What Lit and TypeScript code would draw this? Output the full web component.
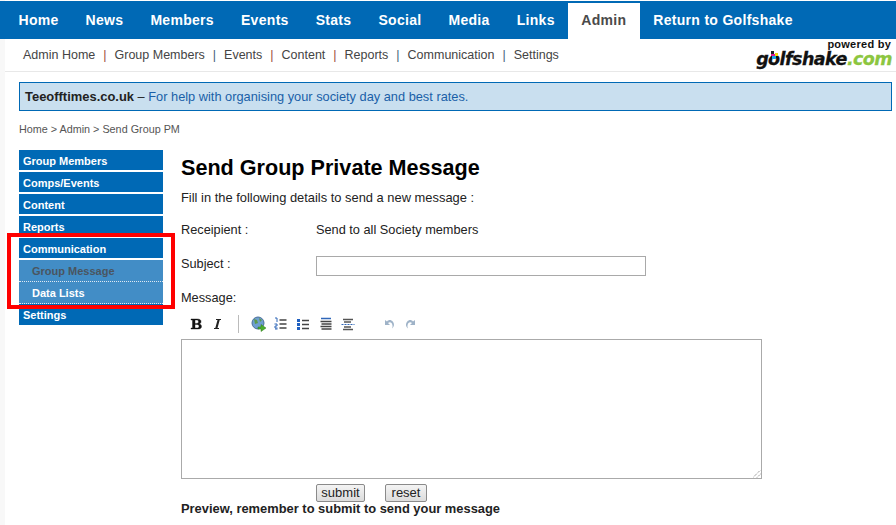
import { LitElement, html, css } from "lit";
import { customElement } from "lit/decorators.js";

const NAV = ["Home", "News", "Members", "Events", "Stats", "Social", "Media", "Links", "Admin", "Return to Golfshake"];
const SUB = ["Admin Home", "Group Members", "Events", "Content", "Reports", "Communication", "Settings"];

@customElement("app-root")
export class AppRoot extends LitElement {
  static styles = css`
    :host { display: block; width: 896px; height: 525px; overflow: hidden; position: relative; background: linear-gradient(90deg, #f8f8f8 5px, #fff 5px); font-family: "Liberation Sans", Arial, sans-serif; color: #222; }
    .nav { margin-top: 1px; height: 38px; background: #0069b5; display: flex; padding-left: 5px; align-items: stretch; }
    .nav a { padding: 0 13.5px; font-size: 14px; font-weight: bold; color: #fff; letter-spacing: .3px; line-height: 38px; }
    .nav a.on { background: #fff; color: #4a4a4a; margin-top: 2px; line-height: 35px; padding: 0 13.5px 0 13px; }
    .sub { height: 32px; margin-left: 5px; border-bottom: 1px solid #e8e8e8; display: flex; align-items: center; padding-left: 18px; font-size: 12.5px; color: #444; position: relative; }
    .sep { margin: 0 8px; color: #9c4a3c; }
    .sep.b { color: #44617a; }
    .logo { margin-left: auto; margin-right: 4px; display: flex; flex-direction: column; align-items: flex-end; align-self: flex-start; position: relative; }
    .pb { font-size: 11px; font-weight: bold; color: #111; line-height: 11px; letter-spacing: .25px; margin-right: 1px; }
    .gs { font-family: "DejaVu Sans", sans-serif; font-style: italic; font-weight: bold; font-size: 17.5px; line-height: 19px; color: #111; letter-spacing: -.55px; white-space: nowrap; -webkit-text-stroke: .3px currentColor; }
    .gs span { color: #8cc63f; }
    .ball { position: absolute; left: 13px; top: 11px; }
    .banner { margin: 10px 4px 0 19px; height: 27px; border: 1px solid #0069b5; background: #c9dfef; padding-left: 5px; font-size: 12.8px; line-height: 27px; color: #1a5fa8; }
    .banner b { color: #222; font-size: 12.95px; }
    .dash { color: #222; }
    .crumb { margin: 12px 0 0 19px; font-size: 10.8px; line-height: 13px; color: #555; }
    .body { display: flex; margin: 14px 0 0 19px; }
    .side { width: 144px; flex: none; font-size: 11px; font-weight: bold; }
    .side div { height: 20px; line-height: 23px; background: #0069b5; color: #fff; padding-left: 4px; border-bottom: 2px solid #fff; }
    .side div.s { background: #428dc6; padding-left: 13px; border-bottom: 1px dotted #dfe9f2; height: 21px; }
    .side div.s.cur { color: #4a5560; }
    .side div.end { border-bottom: none; height: 21px; }
    .main { margin-left: 18px; width: 600px; font-size: 12.75px; color: #222; }
    h1 { margin: 5px 0 0; font-size: 21.6px; line-height: 26px; color: #000; }
    .intro { margin-top: 9px; line-height: 16px; font-size: 12.9px; }
    .row { display: flex; }
    .row .l { width: 135px; flex: none; }
    .r1 { margin-top: 15px; line-height: 17px; }
    .r2 { margin-top: 18px; height: 20px; }
    .r2 .l { line-height: 15px; }
    .input { width: 328px; height: 18px; border: 1px solid #a9a9a9; background: #fff; }
    .msg { margin-top: 14px; line-height: 16px; }
    .tb { display: flex; align-items: center; height: 20px; margin-top: 8px; padding-left: 8px; }
    .tb svg { display: block; flex: none; }
    .ta { margin-top: 5px; width: 579px; height: 138px; border: 1px solid #aaa; position: relative; }
    .grip { position: absolute; right: 0; bottom: 0; }
    .btns { display: flex; margin: 5px 0 0 135px; gap: 20px; }
    .btn { height: 16px; border: 1px solid #8a8a8a; border-radius: 2px; background: linear-gradient(#f4f4f4, #dcdcdc); font-size: 13px; line-height: 16px; text-align: center; color: #222; }
    .cs1 { width: 47px; }
    .cs2 { width: 40px; }
    .foot { font-weight: bold; font-size: 12.9px; line-height: 15px; margin-top: -1px; }
    .red { position: absolute; left: 7px; top: 233px; width: 160px; height: 68px; border: 4px solid #f00; pointer-events: none; }
    .m7 { margin-left: 7px; } .m8 { margin-left: 8px; } .m9 { margin-left: 9px; } .m27 { margin-left: 27px; }
    .div { width: 1px; height: 18px; background: #bbb; margin: 0 12px 0 14px; }
  `;

  render() {
    return html`
      <div class="nav">${NAV.map((n) => html`<a class=${n === "Admin" ? "on" : ""}>${n}</a>`)}</div>
      <div class="sub">
        ${SUB.map((s, i) => html`${i ? html`<span class="sep ${i === 2 || i >= 5 ? "b" : ""}">|</span>` : ""}<span>${s}</span>`)}
        <div class="logo">
          <div class="pb">powered by</div>
          <div class="gs">golfshake<span>.com</span></div>
          <svg class="ball" width="10" height="10" viewBox="0 0 10 10"><path d="M2 1h3v3H2z" fill="#222"/><path d="M2 4h4v2H2z" fill="#e0189a"/><path d="M6 3h3v3H6z" fill="#f6d80f"/><path d="M3 6h4v3H3z" fill="#1ba3e6"/></svg>
        </div>
      </div>
      <div class="banner"><b>Teeofftimes.co.uk</b> <span class="dash">–</span> For help with organising your society day and best rates.</div>
      <div class="crumb">Home &gt; Admin &gt; Send Group PM</div>
      <div class="body">
        <div class="side">
          <div>Group Members</div><div>Comps/Events</div><div>Content</div><div>Reports</div><div>Communication</div>
          <div class="s cur">Group Message</div><div class="s">Data Lists</div><div class="end">Settings</div>
        </div>
        <div class="main">
          <h1>Send Group Private Message</h1>
          <div class="intro">Fill in the following details to send a new message :</div>
          <div class="row r1"><div class="l">Receipient :</div><div>Send to all Society members</div></div>
          <div class="row r2"><div class="l">Subject :</div><div class="input"></div></div>
          <div class="msg">Message:</div>
          <div class="tb">
            <svg width="14" height="14" viewBox="0 0 14 14"><path d="M2 2h6c3 0 4 1 4 2.700 0 1.300-.9 2-2 2.200 1.500.2 2.500 1 2.500 2.500C12.500 11.500 11 12 8.500 12H2v-1h1.500V3H2zM6 3v3.400h1.500C9 6.400 9.500 5.800 9.500 4.700S9 3 7.500 3zM6 7.400V11h2c1.400 0 2-.7 2-1.800S9.400 7.400 8 7.400z" fill="#111" stroke="#111" stroke-width=".4"/></svg>
            <svg class="m7" width="14" height="14" viewBox="0 0 14 14"><path d="M6 2h5v1H9.700L7.500 11H9v1H4v-1h1.300L7.500 3H6z" fill="#222"/></svg>
            <span class="div"></span>
            <svg width="16" height="16" viewBox="0 0 16 16"><circle cx="7" cy="7" r="6" fill="#6f9fd0"/><path d="M3 3l3 1 1 3-3 1zM8 2l3 2-2 2z" fill="#5d9a4a"/><circle cx="7" cy="7" r="6" fill="none" stroke="#496f99"/><path d="M7 11h3V8.500l5 3.500-5 3.500V13H7z" fill="#4caf2e" stroke="#2f7a1a" stroke-width=".5"/></svg>
            <svg class="m7" width="14" height="14" viewBox="0 0 14 14"><path d="M1 1h2v4M.5 7h2.500v2H1v2h2.500M1 12h2.500" fill="none" stroke="#2f66b8"/><path d="M5.500 3h7M5.500 7h7M5.500 11h7" stroke="#444" stroke-width="1.500"/></svg>
            <svg class="m8" width="14" height="14" viewBox="0 0 14 14"><path d="M1 2h3v3H1zM1 6h3v3H1zM1 10h3v3H1z" fill="#1f5fc0"/><path d="M6 3.500h7M6 7.500h7M6 11.500h7" stroke="#444" stroke-width="1.500"/></svg>
            <svg class="m9" width="14" height="14" viewBox="0 0 14 14"><path d="M2 1.500h10" stroke="#2f66b8" stroke-width="1.500"/><path d="M1.500 4.500h11M2.500 7h10M1.500 9.500h11M2.500 12h10" stroke="#444" stroke-width="1.300"/></svg>
            <svg class="m8" width="14" height="14" viewBox="0 0 14 14"><path d="M2 2.500h10M3 5h7M3 10h7M2 12.500h10" stroke="#555" stroke-width="1.300"/><path d="M.5 7.500h13" stroke="#2f66b8" stroke-dasharray="2 1"/></svg>
            <svg class="m27" width="14" height="14" viewBox="0 0 14 14"><path d="M3 3v5h5L6 6c2-1.500 4-.5 4.500 2.500.2 1 0 2-.5 3 2.500-2 2.500-5 .7-7C9 2.500 6.500 2.500 5 4.500z" fill="#9fb3c8"/></svg>
            <svg class="m8" width="14" height="14" viewBox="0 0 14 14"><path d="M11 3v5H6l2-2C6 4.500 4 5.500 3.500 8.500c-.2 1 0 2 .5 3-2.500-2-2.500-5-.7-7C5 2.500 7.500 2.500 9 4.500z" fill="#9fb3c8"/></svg>
          </div>
          <div class="ta">
            <svg class="grip" width="8" height="8" viewBox="0 0 8 8"><path d="M0 7.500L7.500 0M4 7.500L7.500 4" stroke="#777" stroke-dasharray="1 1"/></svg>
          </div>
          <div class="btns"><div class="btn cs1">submit</div><div class="btn cs2">reset</div></div>
          <div class="foot">Preview, remember to submit to send your message</div>
        </div>
      </div>
      <div class="red"></div>
    `;
  }
}
